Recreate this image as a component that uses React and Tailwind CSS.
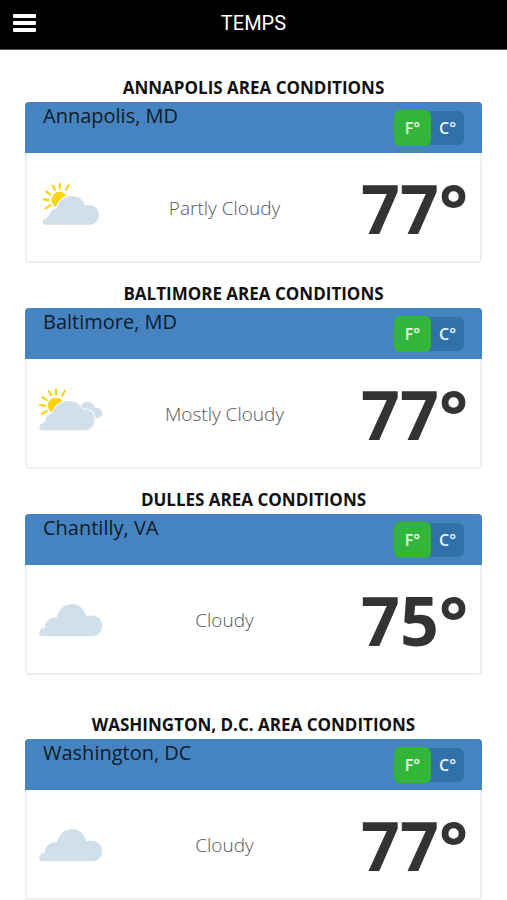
import { useState } from 'react'

const STATIONS = [
  { area: 'ANNAPOLIS AREA CONDITIONS', city: 'Annapolis, MD', sky: 'Partly Cloudy', temp: 77 },
  { area: 'BALTIMORE AREA CONDITIONS', city: 'Baltimore, MD', sky: 'Mostly Cloudy', temp: 77 },
  { area: 'DULLES AREA CONDITIONS', city: 'Chantilly, VA', sky: 'Cloudy', temp: 75 },
  { area: 'WASHINGTON, D.C. AREA CONDITIONS', city: 'Washington, DC', sky: 'Cloudy', temp: 77 },
]

function Sun({ x, y }) {
  return (
    <g transform={`translate(${x} ${y})`}>
      <circle r="8" fill="#fad413" />
      <path
        d="M0.3 -16V-11M-6.8 -14.1L-4.5 -10M9.2 -14.6L6.4 -10M-13.3 -8.3L-9.2 -5.3M-15.9 -0.4L-10.8 0.3M-14 8.6L-9 5.5"
        stroke="#fad413"
        strokeWidth="2.2"
        strokeLinecap="round"
      />
    </g>
  )
}

function SkyIcon({ sky }) {
  return (
    <svg viewBox="0 0 64 56" className="h-14 w-16" fill="none" aria-hidden="true">
      {sky === 'Partly Cloudy' && (
        <>
          <Sun x={20.5} y={19.8} />
          <path
            d="M6.5 44.7C3.2 44.7 2.6 40.8 5.5 38.9C8.5 37.4 9.6 36.6 10.4 34.6C11.6 31.2 13.6 29 17.5 28.3C20 20.8 25.5 16 33 16C40 16 44.2 20 46.3 25.6C53.8 23.6 59.8 28 59.8 34.8C59.8 40.5 56.5 44.7 50.5 44.7Z"
            fill="#d0dfe9"
            stroke="#fff"
            strokeWidth="2"
            paintOrder="stroke"
          />
        </>
      )}
      {sky === 'Mostly Cloudy' && (
        <>
          <Sun x={16.8} y={19.4} />
          <path
            d="M41.5 19.5C43.5 16.7 46.2 15.8 49.2 16.1C53 16.5 55.2 18.8 56.3 21.9C60.3 21.5 63.2 23.9 63.2 27.1C63.2 30.1 61.2 32.3 57.8 32.5L46 25Z"
            fill="#d0dfe9"
          />
          <path
            d="M4 44.3C-0.6 44.3 -0.8 39.2 3 37.3C5.4 36.6 6 35.6 6.7 33.2C7.8 29.5 10.5 27.5 14 26.7C16.5 19.2 22.8 15 30.3 15C36.8 15 41.2 18.3 43.5 23.8C50.3 22.4 55.6 26.8 55.6 33.3C55.6 40 51.6 44.3 45.5 44.3Z"
            fill="#d0dfe9"
            stroke="#fff"
            strokeWidth="2"
            paintOrder="stroke"
          />
        </>
      )}
      {sky === 'Cloudy' && (
        <path
          d="M4 44.3C0.8 44.3 -0.4 42.3 0.3 40C0.9 37.7 2.9 36 5.7 35.8C5.8 29.3 10.8 24.9 18 25.3C20.2 16.8 25.5 12 32.8 12C40.3 12 45 16.7 47.2 24.2C55.8 21.7 63.2 26.2 63.2 34C63.2 40.3 59.2 44.3 53 44.3Z"
          fill="#d0e0ea"
        />
      )}
    </svg>
  )
}

function UnitToggle({ unit, onChange }) {
  return (
    <div className="mr-[18px] flex h-[34px] items-center rounded-md bg-[#3071a9] text-base font-semibold text-white/90">
      <button
        type="button"
        aria-pressed={unit === 'F'}
        onClick={() => onChange('F')}
        className={unit === 'F' ? 'h-9 w-[37px] rounded-md bg-[#32b63a]' : 'h-9 w-[37px] rounded-md'}
      >
        F°
      </button>
      <button
        type="button"
        aria-pressed={unit === 'C'}
        onClick={() => onChange('C')}
        className={unit === 'C' ? 'h-9 w-[33px] rounded-md bg-[#32b63a]' : 'h-9 w-[33px] rounded-md'}
      >
        C°
      </button>
    </div>
  )
}

function StationCard({ station }) {
  const [unit, setUnit] = useState('F')
  const temp = unit === 'F' ? station.temp : Math.round(((station.temp - 32) * 5) / 9)

  return (
    <section>
      <h2 className="mb-0.5 text-center text-[17px] leading-6 font-bold text-[#111]">{station.area}</h2>
      <div className="overflow-hidden rounded-sm shadow-[inset_0_0_0_2px_#eeeeee]">
        <div className="flex h-[51px] items-center justify-between bg-[#4684c1]">
          <h3 className="self-start pl-[18px] text-xl leading-7 text-[#0f1c29]">{station.city}</h3>
          <UnitToggle unit={unit} onChange={setUnit} />
        </div>
        <div className="grid h-[110px] grid-cols-[92px_1fr_134px] items-center">
          <div className="pl-3.5">
            <SkyIcon sky={station.sky} />
          </div>
          <p className="pr-4 text-center text-[19px] leading-7 font-light text-[#555]">
            {station.sky}
          </p>
          <p className="pr-3.5 text-right text-[68px] leading-none font-bold text-[#333]">{temp}°</p>
        </div>
      </div>
    </section>
  )
}

export default function App() {
  return (
    <div className="bg-white font-['Open_Sans',sans-serif]">
      <header className="grid h-[50px] grid-cols-[48px_1fr_48px] items-center border-b border-[#555] bg-black pb-1 text-white">
        <button type="button" aria-label="Menu" className="ml-[13px] flex w-[23px] flex-col gap-[3px]">
          <span className="h-1 w-full rounded-[1px] bg-white" />
          <span className="h-1 w-full rounded-[1px] bg-white" />
          <span className="h-1 w-full rounded-[1px] bg-white" />
        </button>
        <h1 className="text-center font-[Roboto,sans-serif] text-xl">TEMPS</h1>
      </header>
      <main className="flex flex-col gap-[19px] px-[25px] pt-[26px]">
        {STATIONS.map((station) => (
          <div key={station.city} className="last:pt-[19px]">
            <StationCard station={station} />
          </div>
        ))}
      </main>
    </div>
  )
}
